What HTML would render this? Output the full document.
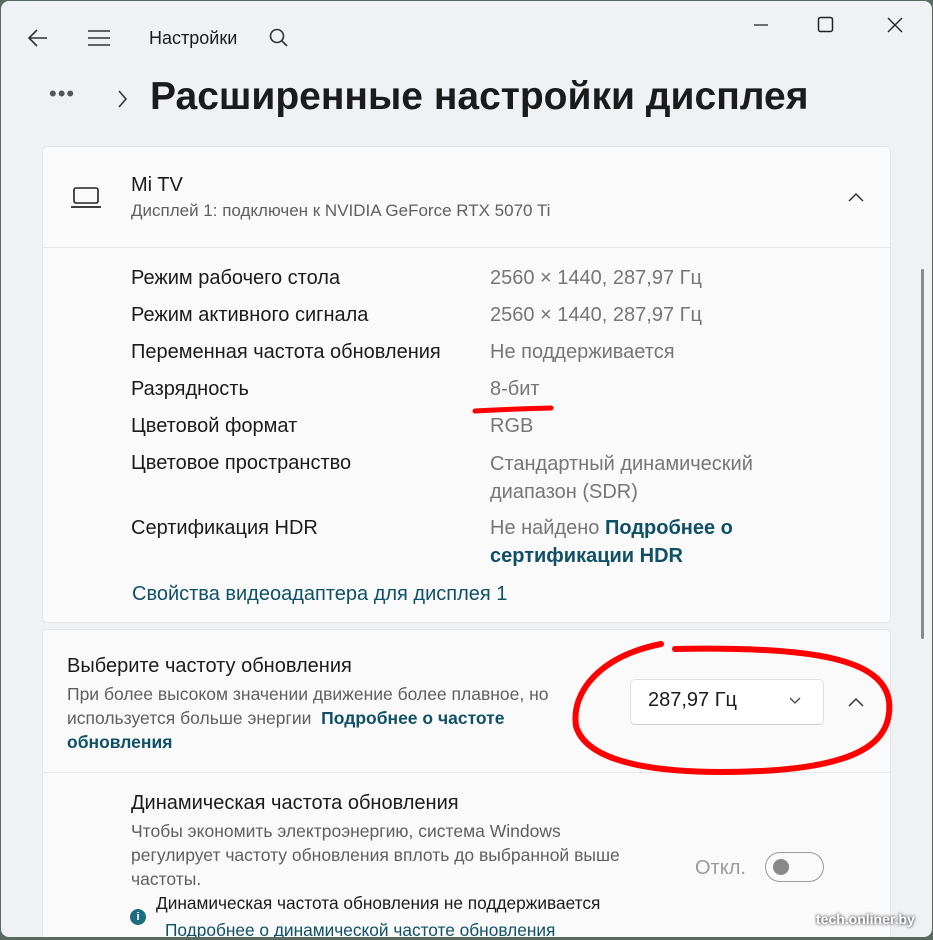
<!DOCTYPE html>
<html><head><meta charset="utf-8"><style>
*{margin:0;padding:0;box-sizing:border-box}
body{width:933px;height:940px;overflow:hidden;background:#5a6a60;font-family:"Segoe UI","Liberation Sans",sans-serif;color:#1b1b1b}
.win{position:absolute;left:1px;top:1px;width:931px;height:936px;background:#eef2f4;border-radius:8px;overflow:hidden}
.t{position:absolute;white-space:nowrap}
.card{position:absolute;left:41px;width:849px;background:#fafafa;border:1px solid #e3e5e6;border-radius:5px}
.sep{position:absolute;left:0;right:0;height:1px;background:#e6e8e9}
.lab{font-size:20px;color:#1b1b1b}
.val{font-size:20px;color:#767676}
.lnk{color:#0f5067;font-weight:bold}
</style></head><body><div class="win">
<svg style="position:absolute;left:26px;top:27px" width="22" height="20"><path d="M20 10H2M10 2L2 10l8 8" stroke="#333" stroke-width="1.6" fill="none"/></svg>
<svg style="position:absolute;left:86px;top:28px" width="24" height="18"><path d="M1 2h22M1 9h22M1 16h22" stroke="#333" stroke-width="1.6"/></svg>
<div class="t" style="left:148px;top:27px;font-size:18px">Настройки</div>
<svg style="position:absolute;left:267px;top:26px" width="22" height="22"><circle cx="9" cy="9" r="6.5" stroke="#333" stroke-width="1.6" fill="none"/><path d="M13.5 13.5L19 19" stroke="#333" stroke-width="1.6"/></svg>
<svg style="position:absolute;left:752px;top:22px" width="16" height="4"><path d="M1 2h14" stroke="#222" stroke-width="1.3"/></svg>
<svg style="position:absolute;left:816px;top:15px" width="18" height="18"><rect x="1.5" y="1.5" width="14" height="14" rx="2" stroke="#222" stroke-width="1.5" fill="none"/></svg>
<svg style="position:absolute;left:885px;top:15px" width="18" height="18"><path d="M2 2l14 14M16 2L2 16" stroke="#222" stroke-width="1.4"/></svg>
<div class="t" style="left:48px;top:80px;font-size:22px;color:#555;letter-spacing:1px">•••</div>
<svg style="position:absolute;left:116px;top:88px" width="12" height="20"><path d="M2 2l7 8-7 8" stroke="#333" stroke-width="1.6" fill="none"/></svg>
<div class="t" style="left:149px;top:74px;font-size:39px;font-weight:bold;color:#1b1b1b">Расширенные настройки дисплея</div>

<div class="card" style="top:145px;height:477px">
<svg style="position:absolute;left:27px;top:39px" width="32" height="24"><rect x="4" y="2" width="24" height="15" rx="2" stroke="#222" stroke-width="1.6" fill="none"/><path d="M1 21h30" stroke="#222" stroke-width="1.8"/></svg>
<div class="t" style="left:88px;top:27px;font-size:20px">Mi TV</div>
<div class="t" style="left:88px;top:54px;font-size:17px;color:#5f5f5f">Дисплей 1: подключен к NVIDIA GeForce RTX 5070 Ti</div>
<svg style="position:absolute;left:804px;top:44px" width="18" height="12"><path d="M2 10l7-7 7 7" stroke="#333" stroke-width="1.5" fill="none"/></svg>
<div class="sep" style="top:100px"></div>
<div class="t lab" style="left:88px;top:120px">Режим рабочего стола</div><div class="t val" style="left:447px;top:120px">2560 × 1440, 287,97 Гц</div>
<div class="t lab" style="left:88px;top:157px">Режим активного сигнала</div><div class="t val" style="left:447px;top:157px">2560 × 1440, 287,97 Гц</div>
<div class="t lab" style="left:88px;top:194px">Переменная частота обновления</div><div class="t val" style="left:447px;top:194px">Не поддерживается</div>
<div class="t lab" style="left:88px;top:231px">Разрядность</div><div class="t val" style="left:447px;top:231px">8-бит</div>
<div class="t lab" style="left:88px;top:268px">Цветовой формат</div><div class="t val" style="left:447px;top:268px">RGB</div>
<div class="t lab" style="left:88px;top:305px">Цветовое пространство</div><div class="t val" style="left:447px;top:303px;line-height:28px">Стандартный динамический<br>диапазон (SDR)</div>
<div class="t lab" style="left:88px;top:370px">Сертификация HDR</div><div class="t val" style="left:447px;top:367px;line-height:28px">Не найдено <span class="lnk">Подробнее о<br>сертификации HDR</span></div>
<div class="t" style="left:89px;top:436px;font-size:20px;color:#0f5067">Свойства видеоадаптера для дисплея 1</div>
</div>

<div class="card" style="top:628px;height:320px">
<div class="t" style="left:24px;top:25px;font-size:20px">Выберите частоту обновления</div>
<div class="t" style="left:24px;top:52px;font-size:17.5px;color:#5f5f5f;line-height:24px">При более высоком значении движение более плавное, но<br>используется больше энергии&nbsp; <span class="lnk">Подробнее о частоте</span><br><span class="lnk">обновления</span></div>
<div style="position:absolute;left:587px;top:49px;width:194px;height:46px;background:#fff;border:1px solid #e0e0e0;border-bottom-color:#ccc;border-radius:5px"></div>
<div class="t" style="left:605px;top:59px;font-size:20px">287,97 Гц</div>
<svg style="position:absolute;left:745px;top:66px" width="14" height="10"><path d="M2 2l5 5 5-5" stroke="#444" stroke-width="1.3" fill="none"/></svg>
<svg style="position:absolute;left:804px;top:66px" width="18" height="12"><path d="M2 10l7-7 7 7" stroke="#333" stroke-width="1.5" fill="none"/></svg>
<div class="sep" style="top:142px"></div>
<div class="t" style="left:88px;top:162px;font-size:20px">Динамическая частота обновления</div>
<div class="t" style="left:88px;top:189px;font-size:17.5px;color:#5f5f5f;line-height:24px">Чтобы экономить электроэнергию, система Windows<br>регулирует частоту обновления вплоть до выбранной выше<br>частоты.</div>
<div class="t" style="left:652px;top:227px;font-size:20px;color:#9a9a9a">Откл.</div>
<div style="position:absolute;left:722px;top:222px;width:59px;height:30px;border:1.5px solid #999;border-radius:15px"></div>
<div style="position:absolute;left:730px;top:229px;width:16px;height:16px;background:#888;border-radius:50%"></div>
<div style="position:absolute;left:87px;top:279px;width:16px;height:16px;background:#1e6c80;border-radius:50%;color:#fff;font-size:11px;text-align:center;line-height:16px;font-weight:bold">i</div>
<div class="t" style="left:113px;top:263px;font-size:17.3px">Динамическая частота обновления не поддерживается</div>
<div class="t" style="left:122px;top:290px;font-size:17.3px;color:#0f5067">Подробнее о динамической частоте обновления</div>
</div>
<div style="position:absolute;left:920px;top:268px;width:3px;height:370px;background:#8a8a8a;border-radius:2px"></div>

<svg style="position:absolute;left:0;top:0" width="933" height="940">
<path d="M474 410 Q510 408 550 407" stroke="#f00" stroke-width="5" fill="none" stroke-linecap="round"/>
<path d="M660 643 C600 655 570 690 575 725 C585 760 650 775 760 770 C860 765 892 740 888 700 C882 660 820 645 674 648" stroke="#f00" stroke-width="6" fill="none" stroke-linecap="round"/>
</svg>
<div class="t" style="left:815px;top:910px;font-size:14px;font-weight:bold;color:#fff;text-shadow:0 0 3px #000">tech.onliner.by</div>
</div></body></html>
